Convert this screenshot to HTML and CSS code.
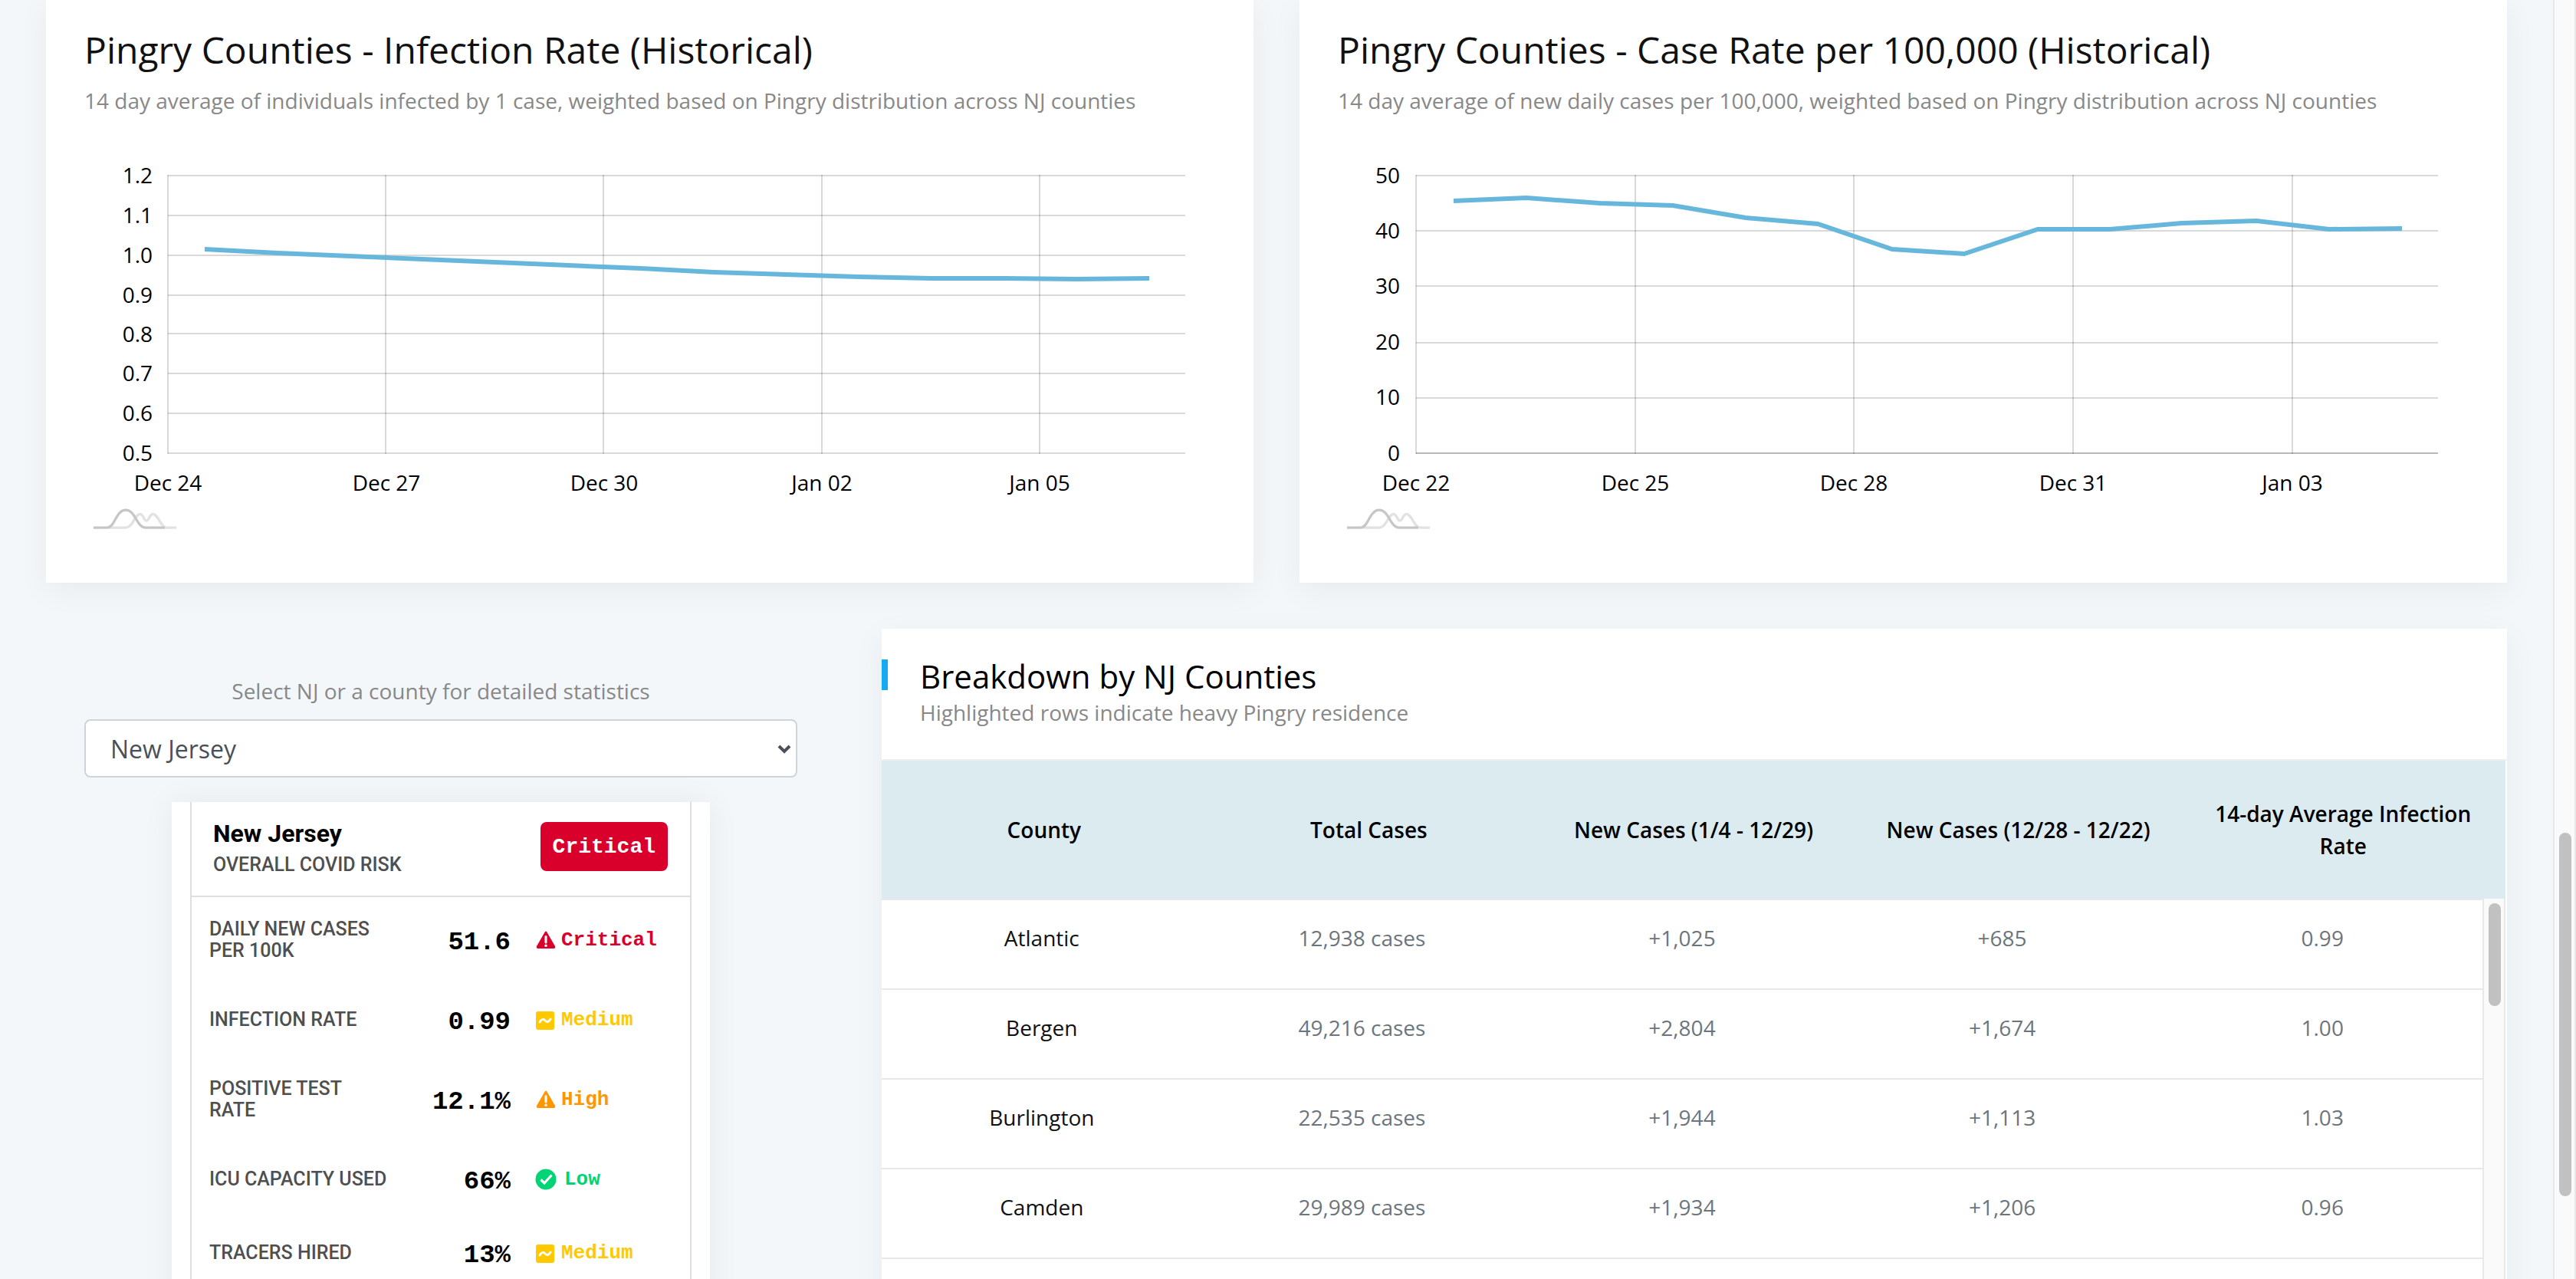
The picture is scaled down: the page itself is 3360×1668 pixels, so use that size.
FILE: index.html
```html
<!DOCTYPE html>
<html lang="en">
<head>
<meta charset="utf-8">
<title>Pingry COVID-19 Dashboard</title>
<link rel="stylesheet" href="styles.css">
</head>
<body>
<svg class="defs" aria-hidden="true">
  <symbol id="chart-logo" viewBox="66 66 324 86">
    <path d="M125 144H190C222 144 226 91 248 91C262 91 262 117 273 117C284 117 284 91 299 91C319 91 330 144 352 144H390" fill="none" stroke="#e2e2e2" stroke-width="10"/>
    <path d="M66 144H118C150 144 153 75 192 75C231 75 234 144 270 144H345" fill="none" stroke="#c6c6c6" stroke-width="10"/>
  </symbol>
  <symbol id="icon-warning" viewBox="0 0 28 28">
    <path d="M13 3Q14 2 15 3L26 22Q27 25 24 25H4Q1 25 2 22Z" fill="currentColor"/>
    <path d="M14 9.500V17" stroke="#fff" stroke-width="3" stroke-linecap="round"/>
    <circle cx="14" cy="21.300" r="1.700" fill="#fff"/>
  </symbol>
  <symbol id="icon-medium" viewBox="0 0 28 28">
    <rect x="1" y="3" width="24" height="24" rx="3" fill="currentColor"/>
    <path d="M6 17C9 12 11 13 13 15S17 18 20 13" fill="none" stroke="#fff" stroke-width="3" stroke-linecap="round"/>
  </symbol>
  <symbol id="icon-check" viewBox="0 0 28 28">
    <circle cx="14" cy="14" r="13.500" fill="currentColor"/>
    <path d="M7.500 14.500L12 19L21.500 8.500" fill="none" stroke="#fff" stroke-width="3.200"/>
  </symbol>
</svg>
<div class="page">
  <main class="content">
    <section class="card chart-card">
      <h2 class="card-title">Pingry Counties - Infection Rate (Historical)</h2>
      <p class="card-subtitle">14 day average of individuals infected by 1 case, weighted based on Pingry distribution across NJ counties</p>
      <svg class="chart" viewBox="0 152 1475 552" role="img" aria-label="Infection rate by day">
        <path class="grid" d="M109 229H1436M109 281H1436M109 333H1436M109 385H1436M109 435H1436M109 487H1436M109 539H1436M109 591H1436"/>
        <path class="grid" d="M109 228V592M393 228V592M677 228V592M962 228V592M1246 228V592"/>
        <g class="tick tick-y">
          <text x="89" y="239">1.2</text><text x="89" y="291">1.1</text><text x="89" y="343">1.0</text><text x="89" y="395">0.9</text>
          <text x="89" y="446">0.8</text><text x="89" y="497">0.7</text><text x="89" y="549">0.6</text><text x="89" y="601">0.5</text>
        </g>
        <g class="tick tick-x">
          <text x="109" y="640">Dec 24</text><text x="394" y="640">Dec 27</text><text x="678" y="640">Dec 30</text><text x="962" y="640">Jan 02</text><text x="1246" y="640">Jan 05</text>
        </g>
        <polyline class="line" points="157,325 252,330 347,334 441,338 536,342 631,346 726,350 821,355 915,358 1010,361 1105,363 1200,363 1294,364 1389,363"/>
        <use href="#chart-logo" x="12" y="662" width="108" height="29"/>
      </svg>
    </section>
    <section class="card chart-card">
      <h2 class="card-title">Pingry Counties - Case Rate per 100,000 (Historical)</h2>
      <p class="card-subtitle">14 day average of new daily cases per 100,000, weighted based on Pingry distribution across NJ counties</p>
      <svg class="chart" viewBox="0 152 1475 552" role="img" aria-label="Case rate per 100,000 by day">
        <path class="grid" d="M102 229H1435M102 301H1435M102 373H1435M102 447H1435M102 519H1435M102 591H1435"/>
        <path class="grid" d="M102 591H1435"/>
        <path class="grid" d="M102 228V592M388 228V592M673 228V592M959 228V592M1245 228V592"/>
        <g class="tick tick-y">
          <text x="81" y="239">50</text><text x="81" y="311">40</text><text x="81" y="383">30</text><text x="81" y="456">20</text><text x="81" y="528">10</text><text x="81" y="601">0</text>
        </g>
        <g class="tick tick-x">
          <text x="102" y="640">Dec 22</text><text x="388" y="640">Dec 25</text><text x="673" y="640">Dec 28</text><text x="959" y="640">Dec 31</text><text x="1245" y="640">Jan 03</text>
        </g>
        <polyline class="line" points="151,262 246,258 342,265 437,268 532,284 626,292 723,325 817,331 913,299 1007,299 1101,291 1198,288 1293,299 1388,298"/>
        <use href="#chart-logo" x="12" y="662" width="108" height="29"/>
      </svg>
    </section>

    <section class="selector">
      <label class="selector-label" for="county">Select NJ or a county for detailed statistics</label>
      <div class="select-box">
        <select id="county" class="select"><option>New Jersey</option></select>
        <svg class="chevron" viewBox="0 0 18 12" aria-hidden="true"><path d="M2 2L9 9L16 2" fill="none" stroke="#495057" stroke-width="4"/></svg>
      </div>
      <div class="widget">
        <div class="widget-frame">
          <header class="widget-head">
            <div>
              <h3 class="widget-title">New Jersey</h3>
              <p class="widget-subtitle">OVERALL COVID RISK</p>
            </div>
            <span class="badge">Critical</span>
          </header>
          <ul class="metrics">
            <li class="metric"><span class="metric-name">DAILY NEW CASES<br>PER 100K</span><span class="metric-value">51.6</span><span class="status critical"><svg class="icon"><use href="#icon-warning"/></svg>Critical</span></li>
            <li class="metric"><span class="metric-name">INFECTION RATE</span><span class="metric-value">0.99</span><span class="status medium"><svg class="icon"><use href="#icon-medium"/></svg>Medium</span></li>
            <li class="metric"><span class="metric-name">POSITIVE TEST<br>RATE</span><span class="metric-value">12.1%</span><span class="status high"><svg class="icon"><use href="#icon-warning"/></svg>High</span></li>
            <li class="metric"><span class="metric-name">ICU CAPACITY USED</span><span class="metric-value">66%</span><span class="status low"><svg class="icon"><use href="#icon-check"/></svg>Low</span></li>
            <li class="metric metric-last"><span class="metric-name">TRACERS HIRED</span><span class="metric-value">13%</span><span class="status medium"><svg class="icon"><use href="#icon-medium"/></svg>Medium</span></li>
          </ul>
        </div>
      </div>
    </section>

    <section class="card table-card">
      <header class="table-head">
        <h2 class="table-title">Breakdown by NJ Counties</h2>
        <p class="table-subtitle">Highlighted rows indicate heavy Pingry residence</p>
      </header>
      <div class="table-wrap">
        <table class="table">
          <thead>
            <tr><th>County</th><th>Total Cases</th><th>New Cases (1/4 - 12/29)</th><th>New Cases (12/28 - 12/22)</th><th>14-day Average Infection Rate</th></tr>
          </thead>
          <tbody>
            <tr><td>Atlantic</td><td>12,938 cases</td><td>+1,025</td><td>+685</td><td>0.99</td></tr>
            <tr><td>Bergen</td><td>49,216 cases</td><td>+2,804</td><td>+1,674</td><td>1.00</td></tr>
            <tr><td>Burlington</td><td>22,535 cases</td><td>+1,944</td><td>+1,113</td><td>1.03</td></tr>
            <tr><td>Camden</td><td>29,989 cases</td><td>+1,934</td><td>+1,206</td><td>0.96</td></tr>
            <tr><td></td><td></td><td></td><td></td><td></td></tr>
          </tbody>
        </table>
        <div class="scroll-track table-track"><div class="scroll-thumb table-thumb"></div></div>
      </div>
    </section>
  </main>
  <div class="scroll-track page-track"><div class="scroll-thumb page-thumb"></div></div>
</div>
</body>
</html>
```

FILE: styles.css
```css
* {
  box-sizing: border-box;
}

body {
  margin: 0;
  background: #f3f7fa;
  color: #000;
  font-family: "Open Sans", sans-serif;
  font-size: 28px;
  line-height: 42px;
}

h2, h3, p, ul {
  margin: 0;
  padding: 0;
}

.defs {
  display: none;
}

.page {
  display: flex;
  height: 100vh;
  overflow: hidden;
}

.content {
  flex: 1;
  min-width: 0;
  display: grid;
  grid-template-columns: repeat(12, minmax(0, 1fr));
  align-content: start;
  gap: 60px;
  padding: 0 60px;
}

.card {
  background: #fff;
  box-shadow: 0 10px 40px rgba(0, 0, 0, 0.05);
}

/* Charts */
.chart-card {
  grid-column: span 6;
  padding: 36px 50px 56px;
}

.card-title {
  margin-bottom: 16px;
  color: #111;
  font-size: 48px;
  font-weight: 400;
  line-height: 58px;
}

.card-subtitle,
.table-subtitle,
.selector-label {
  color: #888;
}

.chart {
  display: block;
  width: 100%;
}

.grid {
  fill: none;
  stroke: #000;
  stroke-opacity: 0.15;
  stroke-width: 2;
}

.line {
  fill: none;
  stroke: #67b7dc;
  stroke-width: 6;
}

.tick {
  font-size: 28px;
}

.tick-y {
  text-anchor: end;
}

.tick-x {
  text-anchor: middle;
}

/* County selector */
.selector {
  grid-column: span 4;
  display: flex;
  flex-direction: column;
  align-items: center;
  padding: 60px 50px 0;
}

.select-box {
  position: relative;
  width: 100%;
  margin: 16px 0 32px;
}

.select {
  display: block;
  width: 100%;
  height: 76px;
  padding: 0 32px;
  appearance: none;
  background: #fff;
  border: 2px solid #ced4da;
  border-radius: 8px;
  color: #495057;
  font: 32px "Open Sans", sans-serif;
}

.chevron {
  position: absolute;
  top: 33px;
  right: 8px;
  width: 18px;
  height: 12px;
}

.widget {
  width: 702px;
  max-width: 100%;
  padding: 0 24px;
  background: #fff;
  box-shadow: 0 0 40px rgba(0, 0, 0, 0.06);
  font-family: Roboto, sans-serif;
}

.widget-frame {
  border: solid #dedede;
  border-width: 0 2px;
}

.widget-head {
  display: flex;
  justify-content: space-between;
  align-items: flex-start;
  padding: 23px 29px 24px 28px;
  border-bottom: 2px solid #dedede;
}

.widget-title {
  margin-bottom: 7px;
  font-size: 32px;
  font-weight: 700;
  line-height: 36px;
}

.widget-subtitle {
  color: #4f4f4f;
  font-size: 25px;
  font-weight: 500;
  line-height: 32px;
}

.badge {
  margin-top: 3px;
  padding: 2px 16px 0;
  background: #d9002c;
  border-radius: 8px;
  color: #fff;
  font: 700 28px/62px "Liberation Mono", monospace;
}

.metrics {
  padding: 4px 0 48px;
  list-style: none;
}

.metric {
  display: grid;
  grid-template-columns: 240px 153px 1fr;
  align-items: center;
  height: 104px;
  padding-left: 23px;
}

.metric-last {
  height: 88px;
}

.metric-name {
  color: #4f4f4f;
  font-size: 25px;
  font-weight: 500;
  line-height: 28px;
}

.metric-value {
  padding-top: 6px;
  font: 700 34px/40px "Liberation Mono", monospace;
  text-align: right;
}

.status {
  display: flex;
  align-items: center;
  gap: 6px;
  padding-left: 32px;
  font: 700 26px/30px "Liberation Mono", monospace;
}

.icon {
  width: 28px;
  height: 28px;
}

.critical { color: #d9002c; }
.medium { color: #ffc900; }
.high { color: #ff9600; }
.low { gap: 10px; color: #00d474; }

/* Counties table */
.table-card {
  grid-column: span 8;
}

.table-head {
  position: relative;
  padding: 36px 50px 40px;
  border-bottom: 2px solid #efefef;
}

.table-head::before {
  content: "";
  position: absolute;
  top: 40px;
  left: 0;
  width: 8px;
  height: 40px;
  background: #16aaf5;
}

.table-title {
  font-size: 42px;
  font-weight: 400;
  line-height: 52px;
}

.table-wrap {
  position: relative;
  margin-right: 2px;
}

.table,
.table thead,
.table tbody {
  display: block;
}

.table tbody {
  padding-right: 30px;
}

.table tr {
  display: grid;
  grid-template-columns: repeat(5, minmax(0, 1fr));
}

.table thead tr {
  align-items: center;
  height: 180px;
  background: #dcebef;
}

.table tbody tr {
  height: 117px;
  border-top: 2px solid #e8e8e8;
}

.table th {
  padding: 0 24px;
  font-weight: 600;
}

.table td {
  padding: 28px 24px;
  color: #6c757d;
  text-align: center;
}

.table td:first-child {
  color: #111;
}

/* Scrollbars */
.scroll-track {
  background: #fafafa;
  border: solid #e8e8e8;
  border-width: 0 2px;
}

.scroll-thumb {
  position: absolute;
  left: 6px;
  width: 16px;
  background: #c1c1c1;
  border-radius: 8px;
}

.table-track {
  position: absolute;
  top: 180px;
  right: 0;
  bottom: 0;
  width: 30px;
}

.table-thumb {
  top: 6px;
  height: 134px;
}

.page-track {
  position: relative;
  width: 30px;
}

.page-thumb {
  top: 1086px;
  height: 474px;
}
```
